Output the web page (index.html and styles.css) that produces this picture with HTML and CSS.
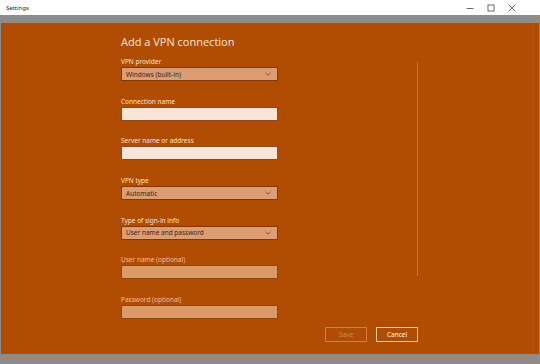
FILE: index.html
```html
<!DOCTYPE html>
<html lang="en">
<head>
    <meta charset="UTF-8">
    <meta name="viewport" content="width=device-width, initial-scale=1.0">
    <title>Settings</title>
    <link rel="stylesheet" href="styles.css">
</head>
<body>
    <div class="titlebar">
        <span class="app-name">Settings</span>
        <div class="controls">
            <svg width="8" height="8" viewBox="0 0 8 8"><line x1="0.5" y1="4.5" x2="7.5" y2="4.5" stroke="#444" stroke-width="0.8"/></svg>
            <svg width="8" height="8" viewBox="0 0 8 8"><rect x="1" y="1" width="6" height="6" fill="none" stroke="#444" stroke-width="0.8"/></svg>
            <svg width="8" height="8" viewBox="0 0 8 8"><path d="M1 1 L7 7 M7 1 L1 7" stroke="#444" stroke-width="0.8"/></svg>
        </div>
    </div>
    <div class="content">
        <div class="scroll-line"></div>
        <h1>Add a VPN connection</h1>
        <form id="vpnForm">
            <div class="form-group">
                <label for="provider">VPN provider</label>
                <div class="select">
                    <span>Windows (built-in)</span>
                    <svg width="6" height="4" viewBox="0 0 6 4"><polyline points="0.5,0.8 3,3.2 5.5,0.8" fill="none" stroke="#6a4632" stroke-width="0.8"/></svg>
                </div>
            </div>
            <div class="form-group">
                <label for="connName">Connection name</label>
                <input type="text" id="connName" class="field">
            </div>
            <div class="form-group">
                <label for="server">Server name or address</label>
                <input type="text" id="server" class="field">
            </div>
            <div class="form-group">
                <label>VPN type</label>
                <div class="select">
                    <span>Automatic</span>
                    <svg width="6" height="4" viewBox="0 0 6 4"><polyline points="0.5,0.8 3,3.2 5.5,0.8" fill="none" stroke="#6a4632" stroke-width="0.8"/></svg>
                </div>
            </div>
            <div class="form-group">
                <label>Type of sign-in info</label>
                <div class="select">
                    <span>User name and password</span>
                    <svg width="6" height="4" viewBox="0 0 6 4"><polyline points="0.5,0.8 3,3.2 5.5,0.8" fill="none" stroke="#6a4632" stroke-width="0.8"/></svg>
                </div>
            </div>
            <div class="form-group">
                <label class="muted" for="user">User name (optional)</label>
                <input type="text" id="user" class="field dim">
            </div>
            <div class="form-group">
                <label class="muted" for="pass">Password (optional)</label>
                <input type="password" id="pass" class="field dim">
            </div>
            <div class="actions">
                <button type="button" class="btn disabled">Save</button>
                <button type="button" class="btn">Cancel</button>
            </div>
        </form>
    </div>
</body>
</html>
```

FILE: styles.css
```css
body {
    margin: 0;
    width: 540px;
    height: 364px;
    background-color: #8d8c88;
    font-family: "Noto Sans", "Open Sans", sans-serif;
    overflow: hidden;
}
.titlebar {
    height: 15px;
    background-color: #fff;
    display: flex;
    align-items: center;
    justify-content: space-between;
    padding: 0 0 0 6px;
}
.app-name {
    font-size: 6px;
    color: #222;
}
.controls {
    display: flex;
    gap: 13px;
    padding-right: 24px;
}
.content {
    position: relative;
    margin: 8px 1px 0 1px;
    height: 331px;
    background-color: #b04d02;
    padding: 11px 0 0 120px;
    box-sizing: border-box;
}
.scroll-line {
    position: absolute;
    left: 416px;
    top: 39px;
    width: 1px;
    height: 214px;
    background-color: #c9732f;
}
h1 {
    margin: 0 0 7px;
    font-family: "Open Sans", sans-serif;
    font-weight: 400;
    font-size: 11px;
    line-height: 16px;
    color: #fbe6d8;
}
.form-group {
    margin-bottom: 15.7px;
    width: 157px;
}
label {
    display: block;
    font-size: 6.5px;
    line-height: 9px;
    margin-bottom: 1px;
    color: #fbe3d2;
}
label.muted {
    color: #f3bf98;
}
.select, .field {
    display: flex;
    align-items: center;
    justify-content: space-between;
    box-sizing: border-box;
    width: 157px;
    height: 14px;
    margin: 0;
    border: 1px solid #7c3a10;
    background-color: #dc9d73;
    padding: 0 6px 0 4px;
    font-size: 6.5px;
    color: #3b2418;
}
.field {
    background-color: #f8e5d8;
    border-color: #8a4a22;
    outline: none;
}
.field.dim {
    background-color: #dc9a68;
    border-color: #8c4614;
}
.actions {
    display: flex;
    justify-content: flex-end;
    gap: 9px;
    width: 297px;
    margin-top: -8px;
}
.btn {
    width: 42px;
    height: 15px;
    padding: 0;
    background-color: transparent;
    border: 1px solid #f7c9a2;
    color: #fff2e8;
    font-family: "Noto Sans", sans-serif;
    font-size: 6.5px;
}
.btn.disabled {
    border-color: #d27f45;
    color: #d9864c;
}
```
